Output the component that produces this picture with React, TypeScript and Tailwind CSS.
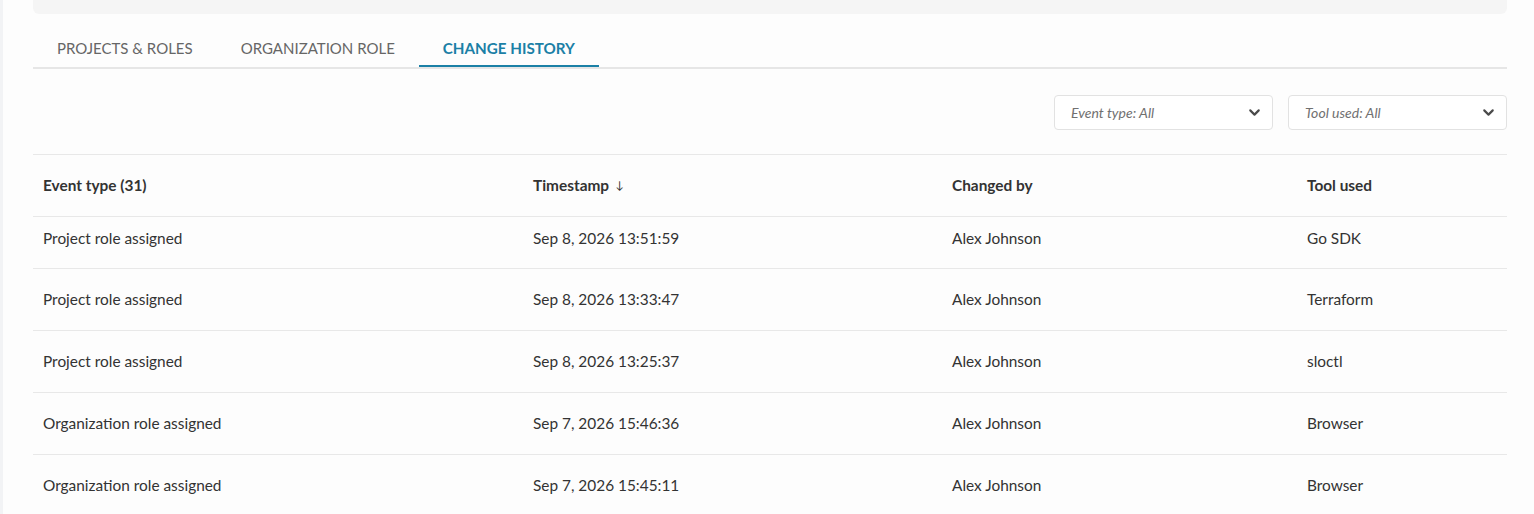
import { ChevronDown } from "lucide-react";
import { FC } from "react";

type Row = {
  event: string;
  time: string;
  by: string;
  tool: string;
};

const rows: Row[] = [
  { event: "Project role assigned", time: "Sep 8, 2026 13:51:59", by: "Alex Johnson", tool: "Go SDK" },
  { event: "Project role assigned", time: "Sep 8, 2026 13:33:47", by: "Alex Johnson", tool: "Terraform" },
  { event: "Project role assigned", time: "Sep 8, 2026 13:25:37", by: "Alex Johnson", tool: "sloctl" },
  { event: "Organization role assigned", time: "Sep 7, 2026 15:46:36", by: "Alex Johnson", tool: "Browser" },
  { event: "Organization role assigned", time: "Sep 7, 2026 15:45:11", by: "Alex Johnson", tool: "Browser" },
];

const tabs = ["PROJECTS & ROLES", "ORGANIZATION ROLE", "CHANGE HISTORY"];

const cols = "grid grid-cols-[490px_419px_355px_1fr]";

const Filter: FC<{ label: string }> = ({ label }) => (
  <div className="w-[219px] h-[35px] border border-[#e2e2e2] rounded-[4px] bg-white flex items-center justify-between pl-[16px] pr-[9px]">
    <span className="italic text-[14px] text-[#707070]">{label}</span>
    <ChevronDown size={17} strokeWidth={3} className="text-[#4a4a4a]" />
  </div>
);

export default function App() {
  return (
    <div
      className="w-[1534px] h-[514px] overflow-hidden bg-[#fdfdfd] flex"
      style={{ fontFamily: "Lato, 'Open Sans', sans-serif" }}
    >
      <div className="w-[3px] bg-[#f2f3f5]" />
      <div className="flex-1 pl-[30px] pr-[27px]">
        <div className="h-[14px] bg-[#f5f5f5] rounded-b-[6px]" />

        <div className="flex border-b-2 border-[#e6e6e6] mt-[18px]">
          {tabs.map((t, i) => (
            <div
              key={t}
              className={
                i === 2
                  ? "px-6 h-[35px] flex items-start pt-[5px] text-[15.2px] font-bold text-[#1b80a6] border-b-2 border-[#1b80a6] -mb-[2px]"
                  : "px-6 h-[35px] flex items-start pt-[5px] text-[15px] text-[#666666]"
              }
            >
              {t}
            </div>
          ))}
        </div>

        <div className="flex justify-end gap-[15px] mt-[26px]">
          <Filter label="Event type: All" />
          <Filter label="Tool used: All" />
        </div>

        <div className="mt-[24px] border-t border-[#e8e8e8] text-[15.4px] text-[#333333]">
          <div className={`${cols} h-[62px] items-center font-bold border-b border-[#e8e8e8]`}>
            <div className="pl-[10px]">Event type (31)</div>
            <div className="pl-[10px] flex items-center gap-[6px]">
              Timestamp <span className="text-[11px] font-normal">↓</span>
            </div>
            <div className="pl-[10px]">Changed by</div>
            <div className="pl-[10px]">Tool used</div>
          </div>
          {rows.map((r, i) => (
            <div
              key={i}
              className={`${cols} ${i === 0 ? "h-[52px] pb-[8px]" : "h-[62px]"} items-center border-b border-[#e8e8e8]`}
            >
              <div className="pl-[10px]">{r.event}</div>
              <div className="pl-[10px]">{r.time}</div>
              <div className="pl-[10px]">{r.by}</div>
              <div className="pl-[10px]">{r.tool}</div>
            </div>
          ))}
        </div>
      </div>
    </div>
  );
}
